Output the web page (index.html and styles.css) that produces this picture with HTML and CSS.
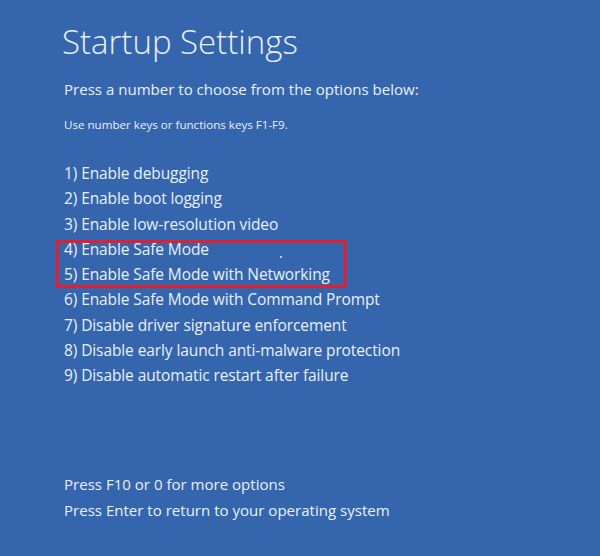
FILE: index.html
```html
<!DOCTYPE html>
<html>
<head>
<meta charset="utf-8">
<link rel="stylesheet" href="styles.css">
</head>
<body>
<main class="screen">
  <h1 class="title">Startup Settings</h1>
  <p class="lead">Press a number to choose from the options below:</p>
  <p class="hint">Use number keys or functions keys F1-F9.</p>
  <ul class="options">
    <li>1) Enable debugging</li>
    <li>2) Enable boot logging</li>
    <li>3) Enable low-resolution video</li>
    <li class="boxed-group">
      <ul class="boxed">
        <li>4) Enable Safe Mode</li>
        <li>5) Enable Safe Mode with Networking</li>
      </ul>
      <span class="highlight"></span>
      <span class="cursor-dot"></span>
    </li>
    <li>6) Enable Safe Mode with Command Prompt</li>
    <li>7) Disable driver signature enforcement</li>
    <li>8) Disable early launch anti-malware protection</li>
    <li>9) Disable automatic restart after failure</li>
  </ul>
  <div class="footer">
    <p>Press F10 or 0 for more options</p>
    <p>Press Enter to return to your operating system</p>
  </div>
</main>
</body>
</html>
```
FILE: styles.css
```css
html, body {
  margin: 0;
  padding: 0;
}
body {
  background: #3465ad;
  width: 600px;
  height: 556px;
  overflow: hidden;
}
.screen {
  font-family: "Open Sans", "Noto Sans", sans-serif;
  color: #eaf0f8;
  padding: 20px 0 0 64px;
  height: 536px;
  display: flex;
  flex-direction: column;
}
.title {
  font-weight: 300;
  font-size: 33px;
  line-height: 44px;
  margin: 0 0 0 -2px;
}
.lead {
  margin: 14px 0 0;
  font-size: 15.05px;
  line-height: 22px;
}
.hint {
  margin: 17px 0 0;
  font-size: 11.6px;
  line-height: 16px;
}
.options {
  list-style: none;
  margin: 28px 0 0;
  padding: 0;
  font-size: 15.5px;
  line-height: 25.3px;
  letter-spacing: -0.1px;
}
.options li {
  margin: 0;
}
.boxed-group {
  position: relative;
}
.boxed {
  list-style: none;
  margin: 0;
  padding: 0;
}
.highlight {
  position: absolute;
  left: -8px;
  top: 3px;
  bottom: -1px;
  width: 291px;
  box-sizing: border-box;
  border: 3px solid #e0202e;
}
.cursor-dot {
  position: absolute;
  left: 216px;
  top: 19px;
  width: 2px;
  height: 2px;
  background: #eaf0f8;
  border-radius: 1px;
}
.footer {
  margin-top: auto;
  margin-bottom: 33px;
  font-size: 15.05px;
  line-height: 26px;
}
.footer p {
  margin: 0;
}
```
